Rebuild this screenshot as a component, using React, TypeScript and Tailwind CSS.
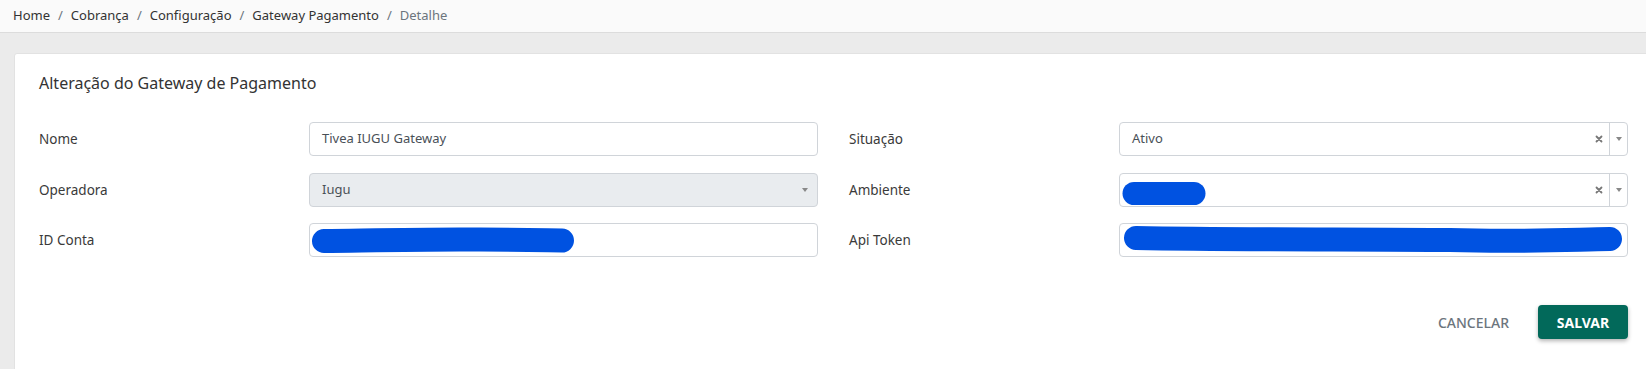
import React from "react";

const font = { fontFamily: '"Noto Sans", "Open Sans", sans-serif' };

function Caret() {
  return (
    <svg width="8" height="6" viewBox="0 0 8 6" className="text-[#888]">
      <path d="M1 1h6L4 5z" fill="currentColor" />
    </svg>
  );
}

function ClearX() {
  return (
    <svg width="8" height="8" viewBox="0 0 8 8">
      <path d="M1.5 1.5l5 5M6.5 1.5l-5 5" stroke="#777" strokeWidth="1.8" strokeLinecap="round" />
    </svg>
  );
}

// scribbles that hide sensitive values in the screenshot
function Scribble({ w, d }: { w: number; d: string }) {
  return (
    <svg width={w} height="34" viewBox={`0 0 ${w} 34`} className="absolute left-0 top-0">
      <path d={d} stroke="#0052e1" strokeWidth="24" strokeLinecap="round" fill="none" />
    </svg>
  );
}

function Field({ label, children }: { label: string; children: React.ReactNode }) {
  return (
    <div className="flex items-center w-[779px]">
      <div className="w-[270px] text-[13.5px] text-[#3a3a3a]">{label}</div>
      {children}
    </div>
  );
}

function SelectBox({ value, scribble }: { value?: string; scribble?: boolean }) {
  return (
    <div className="relative flex items-center h-[34px] w-[509px] border border-[#d0d4d9] rounded-[4px] bg-white">
      <div className="flex-1 pl-[12px] text-[13px] text-[#495057]">{value}</div>
      {scribble && (
        <svg width="100" height="34" viewBox="0 0 100 34" className="absolute left-0 top-0">
          <path d="M14 19.5 L74 19.5" stroke="#0052e1" strokeWidth="23" strokeLinecap="round" fill="none" />
        </svg>
      )}
      <div className="w-[20px] flex justify-center">
        <ClearX />
      </div>
      <div className="h-full w-[18px] border-l border-[#d0d4d9] flex items-center justify-center">
        <Caret />
      </div>
    </div>
  );
}

export default function App() {
  const crumbs = ["Home", "Cobrança", "Configuração", "Gateway Pagamento"];
  return (
    <div className="w-[1646px] h-[369px] overflow-hidden bg-[#ebebeb]" style={font}>
      <div className="h-[33px] bg-[#fafafa] border-b border-[#dcdcdc] flex items-center pl-[13px] text-[13px]">
        {crumbs.map((c) => (
          <React.Fragment key={c}>
            <span className="text-[#333]">{c}</span>
            <span className="px-[8px] text-[#6c757d]">/</span>
          </React.Fragment>
        ))}
        <span className="text-[#6c757d]">Detalhe</span>
      </div>

      <div className="pt-[20px] pl-[14px]">
        <div className="w-[1640px] h-[330px] bg-white border border-[#e2e2e2] rounded-[3px] pt-[17px] pl-[24px] pr-[24px]">
          <div className="text-[16px] leading-[24px] text-[#333] mb-[27px]">
            Alteração do Gateway de Pagamento
          </div>

          <div className="flex gap-[31px] mb-[17px]">
            <Field label="Nome">
              <div className="flex items-center h-[34px] w-[509px] border border-[#d0d4d9] rounded-[4px] pl-[12px] text-[13px] text-[#495057]">
                Tivea IUGU Gateway
              </div>
            </Field>
            <Field label="Situação">
              <SelectBox value="Ativo" />
            </Field>
          </div>

          <div className="flex gap-[31px] mb-[16px]">
            <Field label="Operadora">
              <div className="flex items-center h-[34px] w-[509px] border border-[#d0d4d9] rounded-[4px] bg-[#e9ecef] pl-[12px] pr-[8px] text-[13px] text-[#495057]">
                <span className="flex-1">Iugu</span>
                <Caret />
              </div>
            </Field>
            <Field label="Ambiente">
              <SelectBox scribble />
            </Field>
          </div>

          <div className="flex gap-[31px]">
            <Field label="ID Conta">
              <div className="relative h-[34px] w-[509px] border border-[#d0d4d9] rounded-[4px] bg-white">
                <Scribble w={300} d="M14 17 C80 16 120 15 170 15.5 S230 16 252 16.5" />
              </div>
            </Field>
            <Field label="Api Token">
              <div className="relative h-[34px] w-[509px] border border-[#d0d4d9] rounded-[4px] bg-white">
                <Scribble w={509} d="M16 14 C120 16 250 15 330 16 C400 18 440 16 490 15" />
              </div>
            </Field>
          </div>

          <div className="flex justify-end items-center mt-[48px] pr-[1px]">
            <button className="text-[14px] font-medium text-[#6c757d] uppercase mr-[29px]">Cancelar</button>
            <button className="h-[34px] w-[90px] rounded-[4px] bg-[#02695a] text-white text-[14px] font-bold shadow-[0_2px_4px_rgba(0,0,0,0.3)]">
              SALVAR
            </button>
          </div>
        </div>
      </div>
    </div>
  );
}
